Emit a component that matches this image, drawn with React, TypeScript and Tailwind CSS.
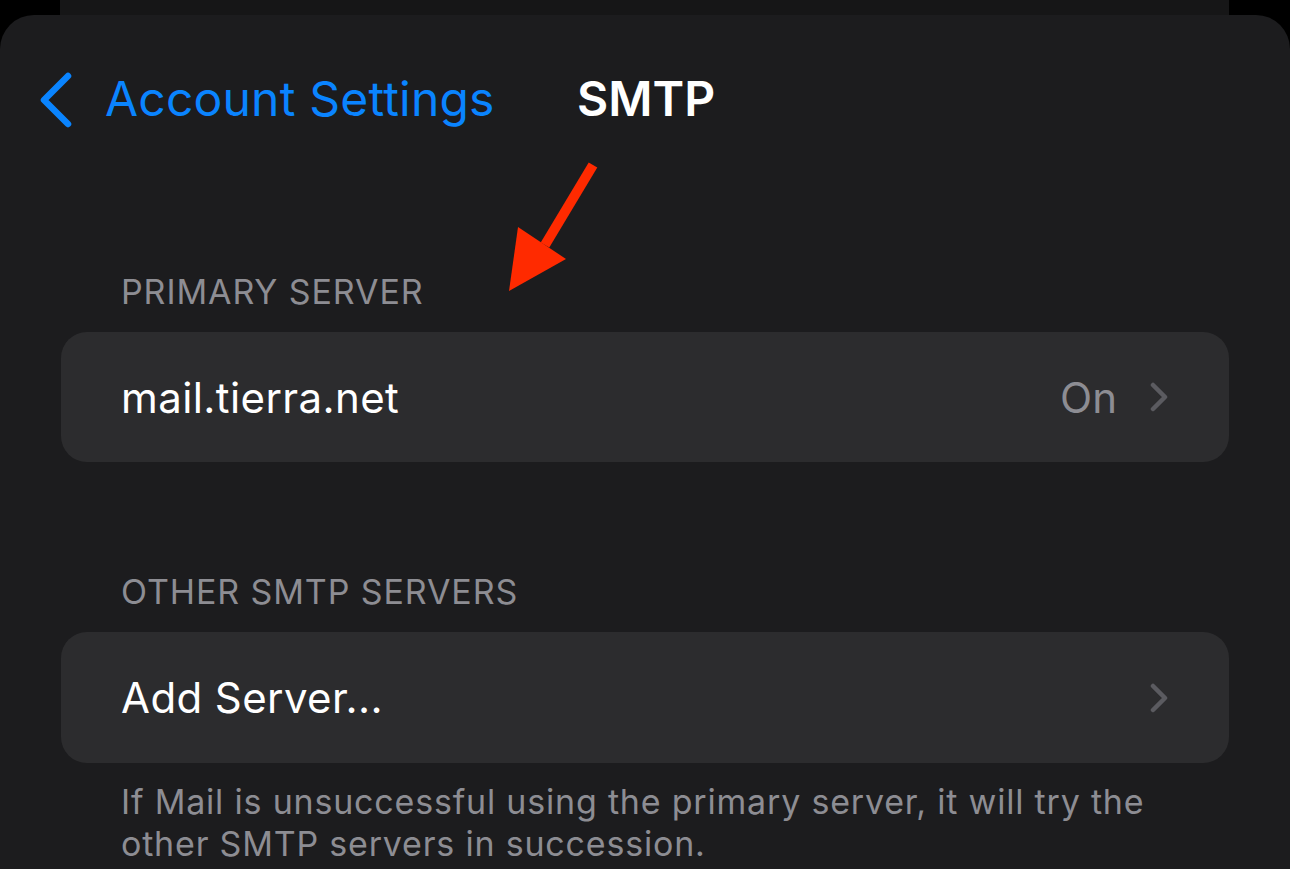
import React from "react";

function Chevron() {
  return (
    <svg width="20" height="30" viewBox="0 0 20 30" className="shrink-0">
      <polyline points="4,3 16,15 4,27" fill="none" stroke="#5b5b60" strokeWidth="4.5" strokeLinecap="round" strokeLinejoin="round" />
    </svg>
  );
}

export default function App() {
  return (
    <div className="w-[1290px] h-[869px] bg-black overflow-hidden relative" style={{ fontFamily: "Inter, 'Noto Sans', sans-serif" }}>
      <div className="absolute left-[60px] right-[61px] -top-[40px] h-[100px] bg-[#161617] rounded-[40px]" />
      <div className="absolute left-0 right-0 top-[15px] bottom-0 bg-[#1c1c1e] rounded-t-[34px] flex flex-col">
        <div className="relative h-[172px]">
          <svg width="40" height="60" viewBox="0 0 40 60" className="absolute left-[36px] top-[55px]">
            <polyline points="32,6 8,30 32,54" fill="none" stroke="#0a84ff" strokeWidth="6.5" strokeLinecap="round" strokeLinejoin="round" />
          </svg>
          <div className="absolute left-[105px] top-[54px] text-[#0a84ff] text-[48px] leading-[60px] tracking-[0.2px]">Account Settings</div>
          <div className="absolute left-[577px] top-[54px] text-white text-[48px] leading-[60px] font-semibold">SMTP</div>
          <svg width="120" height="160" viewBox="0 0 120 160" className="absolute left-[500px] top-[135px]">
            <line x1="93" y1="15" x2="45" y2="95" stroke="#ff2a00" strokeWidth="10" />
            <polygon points="18,77 66,109 9,141" fill="#ff2a00" />
          </svg>
        </div>
        <div className="px-[61px] pt-[83px]">
          <div className="pl-[60px] text-[#8d8d93] text-[34px] leading-[40px] tracking-[0.9px] mb-[20px] mt-[2px]">PRIMARY SERVER</div>
          <div className="h-[130px] bg-[#2c2c2e] rounded-[26px] flex items-center pl-[60px] pr-[60px]">
            <div className="text-white text-[42px] tracking-[0.4px] flex-1">mail.tierra.net</div>
            <div className="text-[#8d8d93] text-[42px] mr-[32px]">On</div>
            <Chevron />
          </div>
          <div className="pl-[60px] text-[#8d8d93] text-[34px] leading-[40px] tracking-[0.9px] mt-[110px] mb-[20px]">OTHER SMTP SERVERS</div>
          <div className="h-[131px] bg-[#2c2c2e] rounded-[26px] flex items-center pl-[60px] pr-[60px]">
            <div className="text-white text-[42px] tracking-[0.4px] flex-1">Add Server...</div>
            <Chevron />
          </div>
          <div className="pl-[60px] pr-[60px] mt-[18px] text-[#8d8d93] text-[34px] leading-[42px] tracking-[0.8px]">
            If Mail is unsuccessful using the primary server, it will try the other SMTP servers in succession.
          </div>
        </div>
      </div>
    </div>
  );
}
